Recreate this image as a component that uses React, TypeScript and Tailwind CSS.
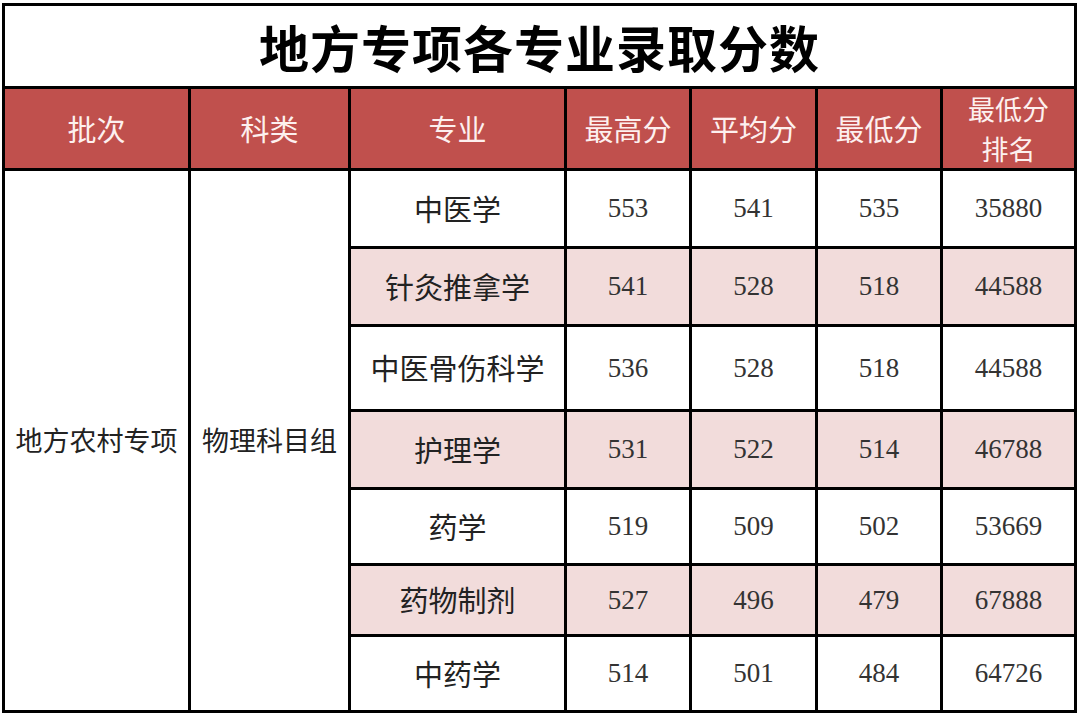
import React from 'react';

const rows = [
  { major: '中医学', max: '553', avg: '541', min: '535', rank: '35880', pink: false },
  { major: '针灸推拿学', max: '541', avg: '528', min: '518', rank: '44588', pink: true },
  { major: '中医骨伤科学', max: '536', avg: '528', min: '518', rank: '44588', pink: false },
  { major: '护理学', max: '531', avg: '522', min: '514', rank: '46788', pink: true },
  { major: '药学', max: '519', avg: '509', min: '502', rank: '53669', pink: false },
  { major: '药物制剂', max: '527', avg: '496', min: '479', rank: '67888', pink: true },
  { major: '中药学', max: '514', avg: '501', min: '484', rank: '64726', pink: false },
];

const cjk = "font-['Noto_Sans_CJK_SC',sans-serif]";
const num = "font-['Liberation_Serif','Noto_Sans_CJK_SC',serif]";

function App() {
  return (
    <div className="w-[1080px] h-[715px] bg-white pt-[3px] pl-[2px]">
      <div className="grid w-[1075px] bg-black p-[3px] gap-[3px] grid-cols-[183px_157px_213px_122px_123px_122px_131px] grid-rows-[80px_79px_75px_75px_82px_75px_73px_68px_73px]">
        {/* Title */}
        <div className={`col-span-7 bg-white flex items-center justify-center text-[50px] font-bold text-black tracking-[1px] ${cjk}`}>
          地方专项各专业录取分数
        </div>

        {/* Header */}
        {['批次', '科类', '专业', '最高分', '平均分', '最低分'].map((h) => (
          <div key={h} className={`bg-[#c0504d] flex items-center justify-center text-[29px] text-[#fdf0ef] ${cjk}`}>
            {h}
          </div>
        ))}
        <div className={`bg-[#c0504d] flex flex-col items-center justify-center text-[27px] leading-[40px] text-[#fdf0ef] ${cjk}`}>
          <span>最低分</span>
          <span>排名</span>
        </div>

        {/* Merged cells */}
        <div className={`row-span-7 bg-white flex items-center justify-center text-[27px] text-[#222] ${cjk}`}>
          地方农村专项
        </div>
        <div className={`row-span-7 bg-white flex items-center justify-center text-[27px] text-[#222] ${cjk}`}>
          物理科目组
        </div>

        {rows.map((r, i) => {
          const bg = r.pink ? 'bg-[#f2dcdb]' : 'bg-white';
          return (
            <React.Fragment key={i}>
              <div className={`${bg} flex items-center justify-center text-[29px] text-[#222] ${cjk}`}>{r.major}</div>
              <div className={`${bg} flex items-center justify-center text-[27px] text-[#333] ${num}`}>{r.max}</div>
              <div className={`${bg} flex items-center justify-center text-[27px] text-[#333] ${num}`}>{r.avg}</div>
              <div className={`${bg} flex items-center justify-center text-[27px] text-[#333] ${num}`}>{r.min}</div>
              <div className={`${bg} flex items-center justify-center text-[27px] text-[#333] ${num}`}>{r.rank}</div>
            </React.Fragment>
          );
        })}
      </div>
    </div>
  );
}

export default App;
